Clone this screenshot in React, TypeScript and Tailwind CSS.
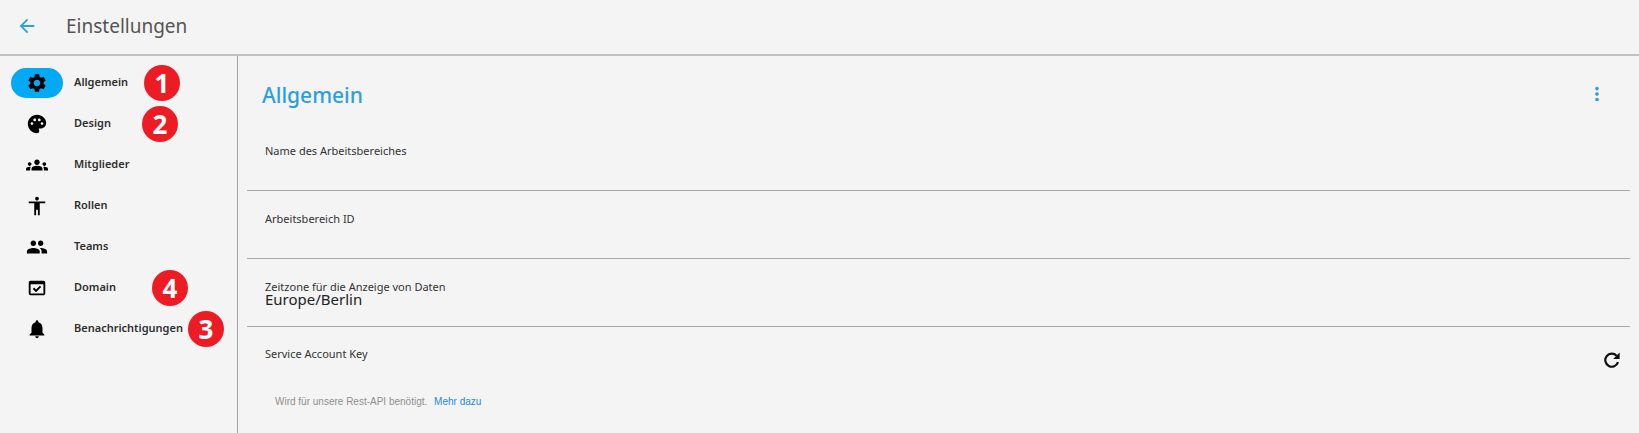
import type { ReactNode } from 'react';
import type { IconType } from 'react-icons';
import {
  MdAccessibility,
  MdArrowBack,
  MdDomainVerification,
  MdGroups,
  MdMoreVert,
  MdNotifications,
  MdPalette,
  MdPeople,
  MdSettings,
} from 'react-icons/md';

type NavItem = {
  label: string;
  icon: IconType;
  active?: boolean;
  badge?: string;
  badgePlace?: string;
};

const navItems: NavItem[] = [
  { label: 'Allgemein', icon: MdSettings, active: true, badge: '1', badgePlace: 'left-36' },
  { label: 'Design', icon: MdPalette, badge: '2', badgePlace: 'left-[142px]' },
  { label: 'Mitglieder', icon: MdGroups },
  { label: 'Rollen', icon: MdAccessibility },
  { label: 'Teams', icon: MdPeople },
  { label: 'Domain', icon: MdDomainVerification, badge: '4', badgePlace: 'left-[152px]' },
  { label: 'Benachrichtigungen', icon: MdNotifications, badge: '3', badgePlace: 'left-[188px]' },
];

function NavRow({ label, icon: Icon, active, badge, badgePlace }: NavItem) {
  return (
    <li className="relative">
      <a
        href="#"
        aria-current={active ? 'page' : undefined}
        className="flex h-[41px] items-center gap-[11px] pl-[11px] text-[11px] font-semibold text-[#2e2e2e]"
      >
        <span
          className={
            active
              ? 'flex h-[30px] w-[52px] items-center justify-center rounded-full bg-[#03a9f4] text-black'
              : 'flex h-[30px] w-[52px] items-center justify-center text-black'
          }
        >
          <Icon className="size-[22px]" />
        </span>
        {label}
      </a>
      {badge && (
        <span
          className={`absolute top-[3px] flex size-9 items-center justify-center rounded-full bg-[#ed1c24] text-[26px] font-bold text-white ${badgePlace}`}
        >
          {badge}
        </span>
      )}
    </li>
  );
}

function Field({ id, label, children }: { id: string; label: string; children: ReactNode }) {
  return (
    <div className="flex h-[68px] flex-col border-b border-[#a8a8a8] px-[18px] pt-[22px]">
      <label htmlFor={id} className="text-[11px] leading-3 text-[#333]">
        {label}
      </label>
      {children}
    </div>
  );
}

function ReloadIcon() {
  return (
    <svg viewBox="0 0 16 16" className="size-4" fill="none" aria-hidden="true">
      <path d="M14 10.2A6.5 6.5 0 1 1 12.6 3.8" stroke="currentColor" strokeWidth="2.2" />
      <path d="M15.6 0.6V7H9.2Z" fill="currentColor" />
    </svg>
  );
}

const valueStyle =
  '-mt-1.5 h-6 w-full appearance-none bg-transparent p-0 text-[15px] leading-6 text-[#222] outline-none';

export default function App() {
  return (
    <div className="flex min-h-screen flex-col bg-[#f4f4f4] font-['Noto_Sans','Open_Sans',sans-serif]">
      <header className="flex h-14 items-center gap-7 border-b-2 border-[#c2c2c2] pb-0.5 pl-4">
        <button type="button" aria-label="Zurück" className="text-[#2d9fdc]">
          <MdArrowBack className="size-[22px]" />
        </button>
        <h1 className="text-[19px] leading-7 text-[#555]">Einstellungen</h1>
      </header>

      <div className="flex grow">
        <nav className="w-[238px] shrink-0 border-r border-[#a0a0a0] pt-1.5">
          <ul>
            {navItems.map((item) => (
              <NavRow key={item.label} {...item} />
            ))}
          </ul>
        </nav>

        <main className="grow px-[9px]">
          <div className="flex h-[67px] items-center justify-between pt-2 pr-[22px] pl-[15px]">
            <h2 className="pt-0.5 text-[21px] leading-8 font-medium text-[#2d9fdc]">Allgemein</h2>
            <button type="button" aria-label="Weitere Optionen" className="text-[#2d9fdc]">
              <MdMoreVert className="size-[22px]" />
            </button>
          </div>

          <Field id="name" label="Name des Arbeitsbereiches">
            <input id="name" type="text" className={valueStyle} />
          </Field>
          <Field id="workspace-id" label="Arbeitsbereich ID">
            <input id="workspace-id" type="text" className={valueStyle} />
          </Field>
          <Field id="timezone" label="Zeitzone für die Anzeige von Daten">
            <select id="timezone" className={valueStyle}>
              <option>Europe/Berlin</option>
            </select>
          </Field>

          <div className="flex items-start justify-between pt-5 pr-[10px] pl-[18px]">
            <div className="flex grow flex-col pt-px">
              <label htmlFor="service-key" className="text-[11px] leading-3 text-[#333]">
                Service Account Key
              </label>
              <input id="service-key" type="text" className={valueStyle} />
            </div>
            <button
              type="button"
              aria-label="Schlüssel erneuern"
              className="flex h-[26px] items-center text-[#111]"
            >
              <ReloadIcon />
            </button>
          </div>
          <p className="pt-4 pl-7 font-['Liberation_Sans',sans-serif] text-[10px] leading-4 text-[#8f8f8f]">
            Wird für unsere Rest-API benötigt.{' '}
            <a href="#" className="ml-1 text-[#1e88e5]">
              Mehr dazu
            </a>
          </p>
        </main>
      </div>
    </div>
  );
}
